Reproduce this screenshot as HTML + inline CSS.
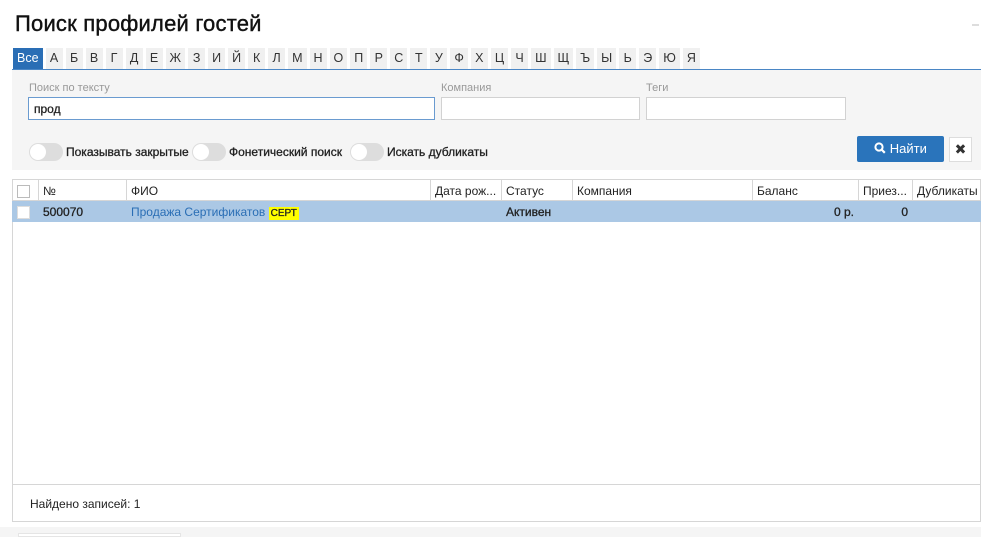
<!DOCTYPE html><html><head><meta charset="utf-8"><style>
*{box-sizing:border-box;margin:0;padding:0}
body{width:981px;height:537px;background:#fff;font-family:"Liberation Sans","DejaVu Sans",sans-serif;font-size:12px;color:#222;position:relative;overflow:hidden}
.abs{position:absolute}
h1{position:absolute;left:15px;top:11px;font-size:22px;font-weight:normal;color:#111;letter-spacing:0.2px;-webkit-text-stroke:0.4px #111}
.tabs{position:absolute;left:13px;top:48px;display:flex;gap:3px}
.tabs span{height:21px;line-height:21px;padding:0 4px;background:#f0f0f0;color:#333;font-size:12.5px;min-width:17px;text-align:center}
.tabs span.a{background:#2a6eb5;color:#fff;padding:0 4px}
.line{left:12px;top:69px;width:969px;height:1px;background:#4a86c5}
.panel{left:12px;top:70px;width:969px;height:100px;background:#f5f5f5}
.lbl{font-size:11px;color:#999}
.inp{height:23px;background:#fff;border:1px solid #d2d2d2}
.tog{width:34px;height:18px;border-radius:9px;background:#ddd;top:143px}
.tog:after{content:"";position:absolute;left:1px;top:1px;width:16px;height:16px;border-radius:8px;background:#fff}
.tl{top:145px;font-size:12px;color:#222}
table{position:absolute;left:12px;top:179px;width:969px;border-collapse:collapse;table-layout:fixed}
td,th{border:1px solid #d6d6d6;height:21px;padding:1px 4px 0;font-weight:normal;text-align:left;font-size:12px;white-space:nowrap;overflow:hidden}
tr.s td{background:#abc8e5;border-color:#abc8e5}
.b{-webkit-text-stroke:0.3px #222}
.cb{display:inline-block;width:13px;height:13px;border:1px solid #bbb;background:#fff;vertical-align:middle}
</style></head><body>
<h1>Поиск профилей гостей</h1>
<div class="abs" style="left:972px;top:24px;width:7px;height:2px;background:#ddd"></div>
<div class="tabs"><span class="a">Все</span><span>А</span><span>Б</span><span>В</span><span>Г</span><span>Д</span><span>Е</span><span>Ж</span><span>З</span><span>И</span><span>Й</span><span>К</span><span>Л</span><span>М</span><span>Н</span><span>О</span><span>П</span><span>Р</span><span>С</span><span>Т</span><span>У</span><span>Ф</span><span>Х</span><span>Ц</span><span>Ч</span><span>Ш</span><span>Щ</span><span>Ъ</span><span>Ы</span><span>Ь</span><span>Э</span><span>Ю</span><span>Я</span></div>
<div class="abs line"></div>
<div class="abs panel"></div>
<div class="abs lbl" style="left:29px;top:82px">Поиск по тексту</div>
<div class="abs lbl" style="left:441px;top:82px">Компания</div>
<div class="abs lbl" style="left:646px;top:82px">Теги</div>
<div class="abs inp b" style="left:28px;top:97px;width:407px;border-color:#6a9bd0;padding:4px 5px;font-size:12px">прод</div>
<div class="abs inp" style="left:441px;top:97px;width:199px"></div>
<div class="abs inp" style="left:646px;top:97px;width:200px"></div>
<div class="abs tog" style="left:29px"></div><div class="abs tl b" style="left:66px">Показывать закрытые</div>
<div class="abs tog" style="left:192px"></div><div class="abs tl b" style="left:229px">Фонетический поиск</div>
<div class="abs tog" style="left:350px"></div><div class="abs tl b" style="left:387px">Искать дубликаты</div>
<div class="abs" style="left:857px;top:136px;width:87px;height:26px;background:#2a74bb;border-radius:2px;color:#fff;font-size:13px;line-height:26px;text-align:center"><svg width="12" height="12" viewBox="0 0 12 12" style="vertical-align:-1px"><circle cx="5" cy="5" r="3.6" fill="none" stroke="#fff" stroke-width="2"/><path d="M7.5 7.5L10.8 10.8" stroke="#fff" stroke-width="2.2"/></svg> Найти</div>
<div class="abs" style="left:949px;top:137px;width:23px;height:25px;background:#fff;border:1px solid #ddd;text-align:center;line-height:23px;font-weight:bold;font-size:14px;color:#333">✖</div>
<table>
<colgroup><col style="width:26px"><col style="width:88px"><col style="width:304px"><col style="width:71px"><col style="width:71px"><col style="width:180px"><col style="width:106px"><col style="width:54px"><col></colgroup>
<tr><th><span class="cb"></span></th><th>№</th><th>ФИО</th><th>Дата рож...</th><th>Статус</th><th>Компания</th><th>Баланс</th><th>Приез...</th><th>Дубликаты</th></tr>
<tr class="s"><td><span class="cb" style="border-color:#ddd"></span></td><td class="b">500070</td><td><span style="color:#2a6eb5">Продажа Сертификатов</span> <span style="background:#ff0;font-size:10px;padding:1px 2px" class="b">СЕРТ</span></td><td></td><td class="b">Активен</td><td></td><td style="text-align:right" class="b">0 р.</td><td style="text-align:right" class="b">0</td><td></td></tr>
</table>
<div class="abs" style="left:12px;top:222px;width:969px;height:300px;border:1px solid #d6d6d6;border-top:none"></div>
<div class="abs" style="left:12px;top:484px;width:969px;height:1px;background:#d6d6d6"></div>
<div class="abs" style="left:30px;top:497px;font-size:12px">Найдено записей: 1</div>
<div class="abs" style="left:0;top:527px;width:981px;height:10px;background:#f5f5f5"></div>
<div class="abs" style="left:18px;top:533px;width:163px;height:4px;background:#fff;border:1px solid #e5e5e5"></div>
</body></html>
